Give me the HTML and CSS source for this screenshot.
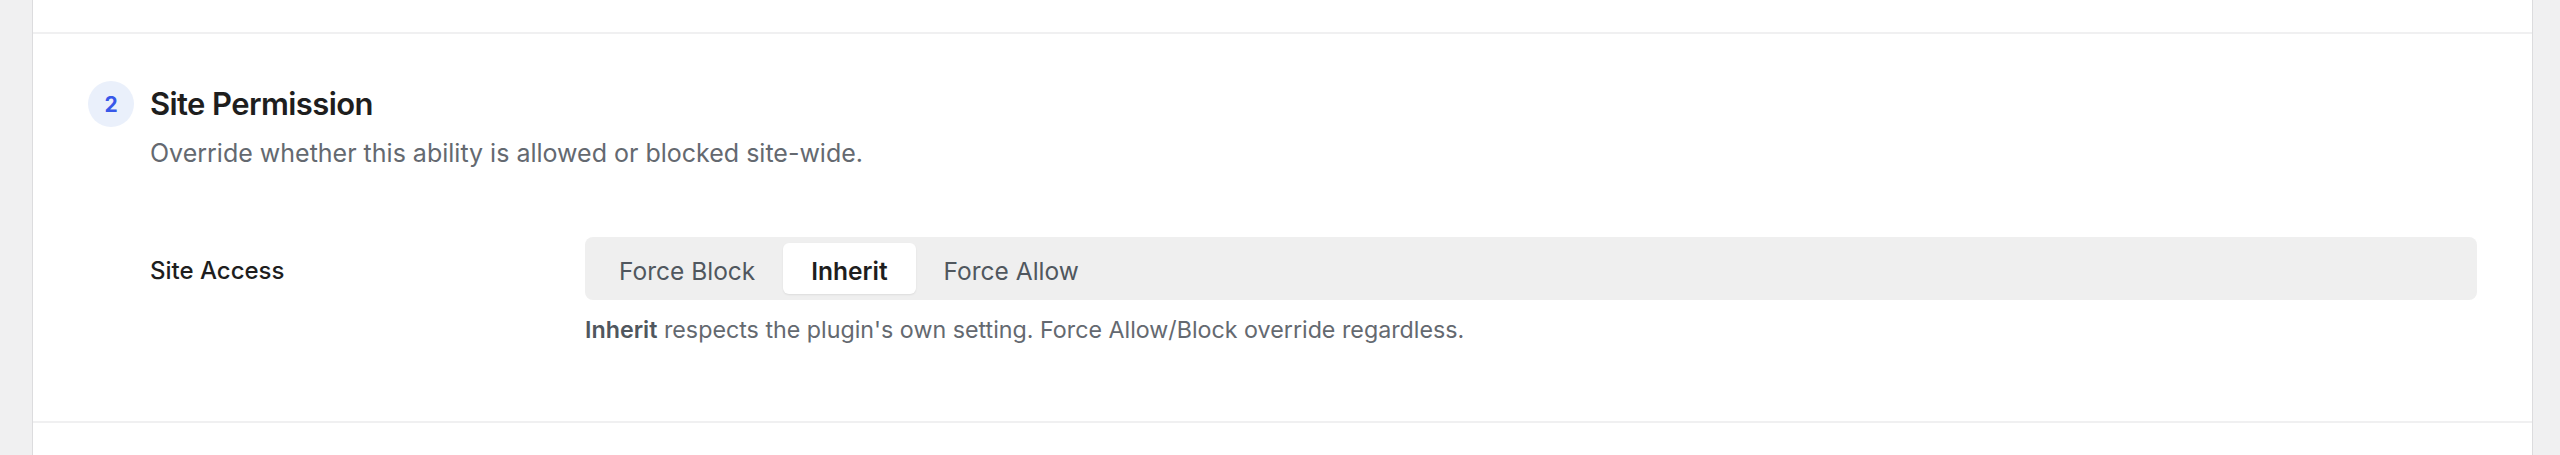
FILE: index.html
```html
<!DOCTYPE html>
<html lang="en">
<head>
<meta charset="utf-8">
<title>Site Permission</title>
<link rel="stylesheet" href="styles.css">
</head>
<body>
<div class="page">
  <div class="card">
    <div class="section-prev"></div>
    <section class="section">
      <div class="section-head">
        <span class="step">2</span>
        <h2 class="section-title">Site Permission</h2>
      </div>
      <p class="section-desc">Override whether this ability is allowed or blocked site-wide.</p>
      <div class="field-row">
        <div class="field-label">Site Access</div>
        <div class="field-control">
          <div class="segmented" role="radiogroup">
            <button class="seg-btn" type="button">Force Block</button>
            <button class="seg-btn is-active" type="button">Inherit</button>
            <button class="seg-btn" type="button">Force Allow</button>
          </div>
          <p class="field-help"><strong>Inherit</strong> respects the plugin's own setting. Force Allow/Block override regardless.</p>
        </div>
      </div>
    </section>
    <div class="section-next"></div>
  </div>
</div>
</body>
</html>
```

FILE: styles.css
```css
* { box-sizing: border-box; }
html, body { margin: 0; padding: 0; height: 100%; }
body {
  background: #f0f0f1;
  font-family: Inter, "Noto Sans", "Liberation Sans", sans-serif;
  color: #1e1e1e;
  overflow: hidden;
}
.page {
  padding: 0 27px 0 32px;
  height: 100%;
}
.card {
  background: #fff;
  border-left: 1px solid #dcdcde;
  border-right: 1px solid #dcdcde;
  height: 100%;
  display: flex;
  flex-direction: column;
}
.section-prev { height: 32px; flex: none; }
.section {
  border-top: 2px solid #f0f0f1;
  border-bottom: 2px solid #f0f0f1;
  padding: 47px 55px 75px 55px;
  flex: none;
}
.section-next { flex: 1; }
.section-head {
  display: flex;
  align-items: center;
  gap: 16px;
  height: 46px;
}
.step {
  width: 46px;
  height: 46px;
  border-radius: 50%;
  background: #eaf0fb;
  color: #3858e9;
  font-size: 21px;
  font-weight: 700;
  display: flex;
  align-items: center;
  justify-content: center;
  flex: none;
}
.section-title {
  margin: 0;
  font-size: 31px;
  font-weight: 600;
  line-height: 46px;
  color: #1e1e1e;
  letter-spacing: -0.6px;
}
.section-desc {
  margin: 8px 0 0 62px;
  font-size: 25px;
  line-height: 36px;
  color: #646970;
}
.field-row {
  display: grid;
  grid-template-columns: 435px 1fr;
  margin: 66px 0 0 62px;
}
.field-label {
  height: 63px;
  padding-top: 4px;
  display: flex;
  align-items: center;
  font-size: 24px;
  font-weight: 500;
  color: #1e1e1e;
}
.segmented {
  display: flex;
  align-items: stretch;
  background: #efefef;
  border-radius: 8px;
  padding: 6px;
  height: 63px;
}
.seg-btn {
  border: 0;
  background: transparent;
  font-family: inherit;
  font-size: 24.5px;
  color: #50575e;
  padding: 4px 28px 0;
  border-radius: 6px;
  cursor: pointer;
}
.seg-btn.is-active {
  background: #fff;
  color: #1e1e1e;
  font-weight: 600;
  box-shadow: 0 1px 2px rgba(0,0,0,0.08);
}
.field-help {
  margin: 14px 0 0;
  font-size: 23.25px;
  line-height: 32px;
  color: #646970;
}
.field-help strong {
  font-weight: 600;
  color: #50575e;
}
```
